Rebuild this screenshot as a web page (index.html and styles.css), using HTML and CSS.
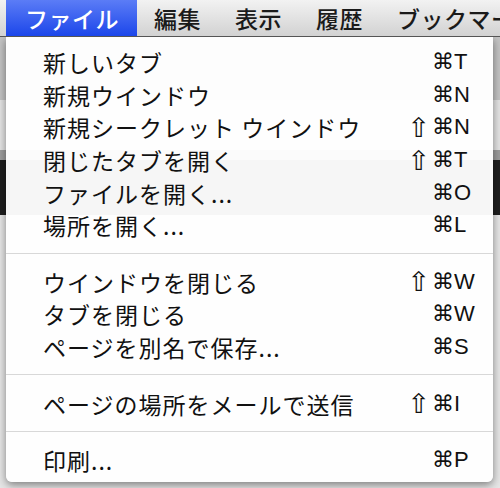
FILE: index.html
```html
<!DOCTYPE html>
<html lang="ja">
<head>
  <meta charset="UTF-8" />
  <title>ファイル メニュー</title>
  <link rel="stylesheet" href="styles.css">
</head>
<body>
  <div class="menubar">
    <span class="bar-item active">ファイル</span>
    <span class="bar-item">編集</span>
    <span class="bar-item">表示</span>
    <span class="bar-item">履歴</span>
    <span class="bar-item">ブックマーク</span>
  </div>

  <!-- browser window behind the open menu -->
  <div class="backdrop">
    <div class="band toolbar"></div>
    <div class="band address"></div>
    <div class="band rule"></div>
    <div class="band bookmarks"></div>
    <div class="band page"></div>
  </div>

  <div class="menu">
    <div class="menu-item"><span class="label">新しいタブ</span><span class="shift"></span><span class="key">⌘T</span></div>
    <div class="menu-item"><span class="label">新規ウインドウ</span><span class="shift"></span><span class="key">⌘N</span></div>
    <div class="menu-item"><span class="label">新規シークレット ウインドウ</span><span class="shift">⇧</span><span class="key">⌘N</span></div>
    <div class="menu-item"><span class="label">閉じたタブを開く</span><span class="shift">⇧</span><span class="key">⌘T</span></div>
    <div class="menu-item"><span class="label">ファイルを開く...</span><span class="shift"></span><span class="key">⌘O</span></div>
    <div class="menu-item"><span class="label">場所を開く...</span><span class="shift"></span><span class="key">⌘L</span></div>
    <div class="separator"></div>
    <div class="menu-item"><span class="label">ウインドウを閉じる</span><span class="shift">⇧</span><span class="key">⌘W</span></div>
    <div class="menu-item"><span class="label">タブを閉じる</span><span class="shift"></span><span class="key">⌘W</span></div>
    <div class="menu-item"><span class="label">ページを別名で保存...</span><span class="shift"></span><span class="key">⌘S</span></div>
    <div class="separator"></div>
    <div class="menu-item"><span class="label">ページの場所をメールで送信</span><span class="shift">⇧</span><span class="key">⌘I</span></div>
    <div class="separator"></div>
    <div class="menu-item"><span class="label">印刷...</span><span class="shift"></span><span class="key">⌘P</span></div>
  </div>
</body>
</html>
```

FILE: styles.css
```css
:root {
  --text: #111;
  --sep: #d8d8d8;
  --blue-top: #5b7cf6;
  --blue-bottom: #1c46ea;
}
html, body {
  margin: 0;
  padding: 0;
}
body {
  width: 500px;
  height: 488px;
  overflow: hidden;
  position: relative;
  font-family: "Noto Sans CJK JP", "Liberation Sans", sans-serif;
  color: var(--text);
  background: #e8e8e8;
}
.menubar {
  height: 36px;
  display: flex;
  align-items: stretch;
  white-space: nowrap;
  overflow: hidden;
  background: linear-gradient(#f2f2f2, #d2d2d2);
  border-bottom: 1px solid #555;
  position: relative;
  z-index: 2;
}
.bar-item {
  display: flex;
  align-items: center;
  padding: 0 17px;
  font-size: 23px;
  letter-spacing: 0.5px;
  color: #1a1a1a;
  font-weight: 500;
}
.bar-item:last-child {
  padding-right: 0;
}
.bar-item.active {
  margin-left: 6px;
  padding: 0 18px 0 19px;
  color: #fff;
  background: linear-gradient(var(--blue-top), var(--blue-bottom));
}
.backdrop {
  display: flex;
  flex-direction: column;
}
.band.toolbar { height: 63px; background: #c3c3c3; }
.band.address { height: 50px; background: #e4e4e4; }
.band.rule { height: 10px; background: #9c9c9c; }
.band.bookmarks { height: 55px; background: #1e1e1e; }
.band.page { height: 280px; background: #e6e6e6; }
.menu {
  position: absolute;
  top: 37px;
  left: 6px;
  width: 487px;
  box-sizing: border-box;
  padding: 9px 0 5px 0;
  background: rgba(255, 255, 255, 0.96);
  border-radius: 0 0 6px 6px;
  box-shadow: 0 3px 8px rgba(0, 0, 0, 0.45);
  z-index: 1;
}
.menu-item {
  height: 32.6px;
  display: flex;
  align-items: center;
  padding: 0 21px 0 37px;
  font-size: 23px;
  letter-spacing: 1px;
  white-space: nowrap;
}
.label {
  flex: 1;
}
.shift,
.key {
  font-family: "Liberation Sans", "DejaVu Sans", sans-serif;
  font-size: 22px;
  letter-spacing: 0;
}
.shift {
  width: 26px;
  font-family: "DejaVu Sans", sans-serif;
  font-size: 27px;
  line-height: 1;
  text-align: right;
}
.key {
  width: 40px;
  margin-left: 2px;
}
.separator {
  height: 1px;
  margin: 11px 0 12px 0;
  background: var(--sep);
}
```
